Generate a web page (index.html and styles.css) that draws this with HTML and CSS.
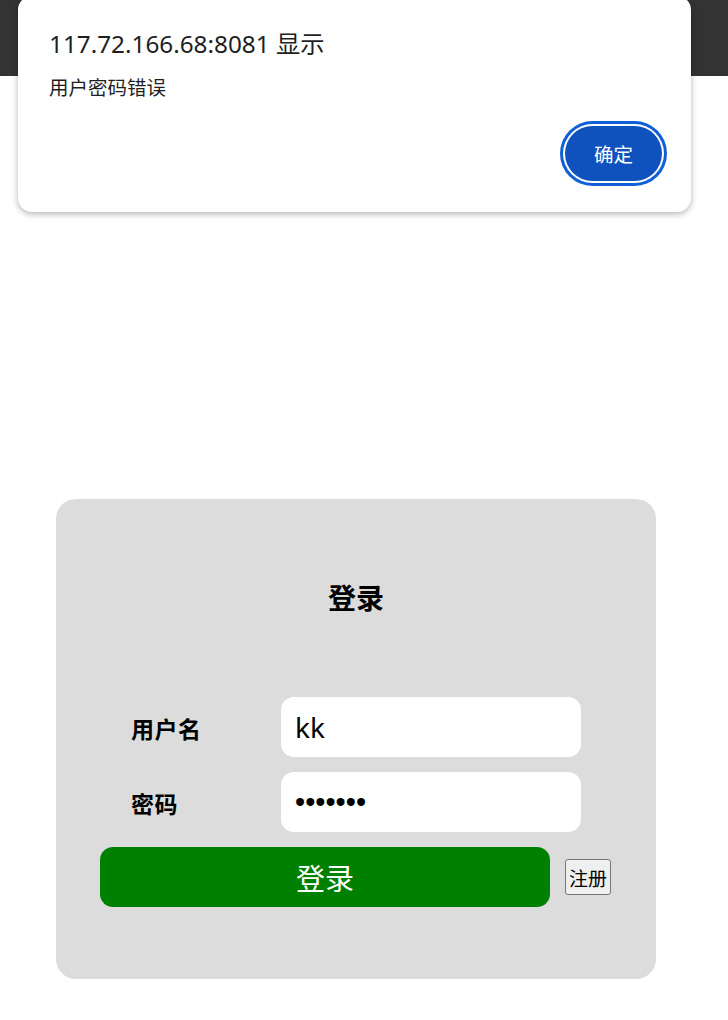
FILE: index.html
```html
<!DOCTYPE html>
<html lang="zh-CN">
<head>
<meta charset="utf-8">
<title>登录</title>
<link rel="stylesheet" href="styles.css">
</head>
<body>
<div class="topbar"></div>

<main class="card">
  <h2 class="card-title">登录</h2>
  <form class="login-form">
    <div class="field">
      <label class="field-label" for="user">用户名</label>
      <input class="field-input" id="user" type="text" value="kk">
    </div>
    <div class="field">
      <label class="field-label" for="pwd">密码</label>
      <input class="field-input pwd" id="pwd" type="password" value="1234567">
    </div>
    <div class="actions">
      <button type="button" class="btn-login">登录</button>
      <button type="button" class="btn-register">注册</button>
    </div>
  </form>
</main>

<div class="dialog">
  <div class="dialog-title">117.72.166.68:8081 显示</div>
  <div class="dialog-msg">用户密码错误</div>
  <div class="dialog-actions">
    <button type="button" class="dialog-ok">确定</button>
  </div>
</div>
</body>
</html>
```

FILE: styles.css
```css
* { box-sizing: border-box; }

html, body {
  margin: 0;
  padding: 0;
  background: #ffffff;
  font-family: "Noto Sans", "Noto Sans CJK SC", sans-serif;
  color: #000;
}

.topbar {
  height: 76px;
  background: #333333;
}

.card {
  width: 600px;
  height: 480px;
  margin: 423px 0 0 56px;
  background: #dcdcdc;
  border-radius: 20px;
  padding-top: 80px;
}

.card-title {
  margin: 0;
  text-align: center;
  font-size: 28px;
  line-height: 36px;
  font-weight: bold;
  font-family: "Noto Sans CJK SC", sans-serif;
}

.login-form {
  margin-top: 82px;
  display: flex;
  flex-direction: column;
  gap: 15px;
}

.field {
  display: flex;
  align-items: center;
  padding-left: 75px;
}

.field-label {
  width: 150px;
  font-size: 23px;
  font-weight: bold;
  font-family: "Noto Sans CJK SC", sans-serif;
  padding-top: 1px;
  letter-spacing: 0.5px;
}

.field-input {
  width: 300px;
  height: 60px;
  border: none;
  border-radius: 13px;
  background: #fff;
  padding: 0 14px;
  font-size: 28px;
  font-family: "Noto Sans", "Noto Sans CJK SC", sans-serif;
  color: #000;
  outline: none;
}

.field-input.pwd {
  font-family: "Liberation Sans", sans-serif;
  font-size: 29px;
  letter-spacing: 0;
}

.actions {
  display: flex;
  align-items: center;
  gap: 15px;
  padding-left: 44px;
}

.btn-login {
  width: 450px;
  height: 60px;
  border: none;
  border-radius: 13px;
  background: #008000;
  color: #fff;
  font-size: 29px;
  font-family: "Noto Sans CJK SC", sans-serif;
  padding: 0;
}

.btn-register {
  height: 36px;
  padding: 0 3px;
  border: 1px solid #767676;
  border-radius: 3px;
  background: #efefef;
  color: #000;
  font-size: 19px;
  font-family: "Noto Sans CJK SC", sans-serif;
}

/* alert dialog overlay */
.dialog {
  position: absolute;
  left: 18px;
  top: -4px;
  width: 673px;
  height: 216px;
  background: #fff;
  border-radius: 14px;
  box-shadow: 0 2px 6px rgba(0, 0, 0, 0.3);
  padding: 32px 29px 0 31px;
  display: flex;
  flex-direction: column;
}

.dialog-title {
  font-size: 24.3px;
  line-height: 32px;
  color: #1f1f1f;
  font-family: "Noto Sans", "Noto Sans CJK SC", sans-serif;
}

.dialog-msg {
  margin-top: 14px;
  font-size: 19.5px;
  line-height: 26px;
  color: #1f1f1f;
  font-family: "Noto Sans CJK SC", sans-serif;
}

.dialog-actions {
  display: flex;
  justify-content: flex-end;
  margin-top: 26px;
}

.dialog-ok {
  width: 97px;
  height: 55px;
  border: none;
  border-radius: 28px;
  background: #1052bd;
  color: #fff;
  font-size: 19.5px;
  font-family: "Noto Sans CJK SC", sans-serif;
  box-shadow: 0 0 0 2px #fff, 0 0 0 5px #0f5fd6;
  padding: 0;
}
```
